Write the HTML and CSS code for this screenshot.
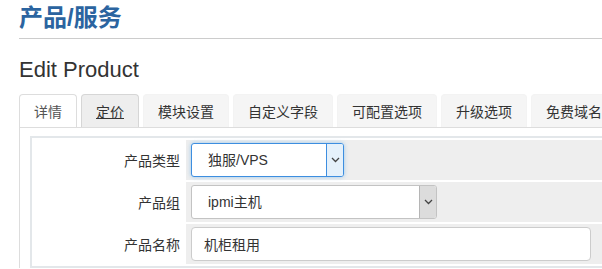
FILE: index.html
```html
<!DOCTYPE html>
<html lang="zh-CN">
  <head>
    <meta charset="UTF-8" />
    <meta name="viewport" content="width=device-width, initial-scale=1.0" />
    <title>产品/服务</title>
    <link rel="stylesheet" href="styles.css">
  </head>
  <body>
    <div class="page">
      <h1 class="page-title">产品/服务</h1>
      <h2 class="sub-title">Edit Product</h2>

      <ul class="tabs">
        <li class="tab active">详情</li>
        <li class="tab hover">定价</li>
        <li class="tab">模块设置</li>
        <li class="tab">自定义字段</li>
        <li class="tab">可配置选项</li>
        <li class="tab">升级选项</li>
        <li class="tab">免费域名</li>
      </ul>

      <div class="tab-content">
        <div class="panel">
          <table class="form-table">
            <tr>
              <td class="field-label">产品类型</td>
              <td class="field-value">
                <div class="select focused" style="width: 153px">
                  <span class="select-text">独服/VPS</span>
                  <span class="select-btn">
                    <svg width="9" height="6" viewBox="0 0 9 6"><path d="M1 1l3.5 3.5L8 1" fill="none" stroke="#444" stroke-width="1.3"/></svg>
                  </span>
                </div>
              </td>
            </tr>
            <tr>
              <td class="field-label">产品组</td>
              <td class="field-value">
                <div class="select" style="width: 246px">
                  <span class="select-text">ipmi主机</span>
                  <span class="select-btn">
                    <svg width="9" height="6" viewBox="0 0 9 6"><path d="M1 1l3.5 3.5L8 1" fill="none" stroke="#444" stroke-width="1.3"/></svg>
                  </span>
                </div>
              </td>
            </tr>
            <tr>
              <td class="field-label">产品名称</td>
              <td class="field-value">
                <div class="text-input">机柜租用</div>
              </td>
            </tr>
          </table>
        </div>
      </div>
    </div>
  </body>
</html>
```

FILE: styles.css
```css
* {
  box-sizing: border-box;
}

body {
  margin: 0;
  font-family: "Liberation Sans", "Noto Sans CJK SC", sans-serif;
  color: #333;
  background: #fff;
}

.page {
  padding-left: 19px;
  overflow: hidden;
}

.page-title {
  margin: 0 0 6px;
  padding-top: 4px;
  font-size: 24px;
  line-height: 28px;
  font-weight: bold;
  color: #2b64a0;
}

.sub-title {
  margin: 0;
  padding-top: 18px;
  border-top: 1px solid #ccc;
  font-size: 22px;
  line-height: 26px;
  font-weight: normal;
  color: #333;
}

.tabs {
  display: flex;
  list-style: none;
  margin: 11px 0 0;
  padding: 0;
  border-bottom: 1px solid #ddd;
  white-space: nowrap;
  overflow: hidden;
}

.tab {
  flex: none;
  margin-right: 4px;
  margin-bottom: -1px;
  padding: 0 14px;
  height: 34px;
  line-height: 32px;
  font-size: 14px;
  font-family: "Noto Sans CJK SC", sans-serif;
  color: #333;
  background: #f5f5f5;
  border: 1px solid #f3f3f3;
  border-bottom-color: #ddd;
  border-radius: 4px 4px 0 0;
}

.tab.active {
  background: #fff;
  color: #555;
  border-color: #ddd;
  border-bottom-color: #fff;
}

.tab.hover {
  background: #eee;
  border-color: #d6d6d6;
  border-bottom-color: #ddd;
  text-decoration: underline;
}

.tab-content {
  border-left: 1px solid #ddd;
  padding: 8px 0 0 10px;
  overflow: hidden;
}

.panel {
  width: calc(100% + 40px);
  border: 2px solid #e3e7ea;
  padding-top: 2px;
}

.form-table {
  width: 100%;
  border-collapse: separate;
  border-spacing: 0 2px;
  margin-top: -2px;
  font-size: 14px;
  font-family: "Noto Sans CJK SC", sans-serif;
}

.form-table td {
  height: 40px;
  padding: 0;
}

.field-label {
  width: 154px;
  text-align: right;
  padding-right: 6px !important;
  background: #fff;
}

.field-value {
  background: #eee;
  padding: 3px 5px !important;
}

.select {
  display: flex;
  height: 34px;
  background: #fff;
  border: 1px solid #c3c3c3;
  border-radius: 3px;
  font-family: "Liberation Sans", "Noto Sans CJK SC", sans-serif;
  overflow: hidden;
}

.select-text {
  flex: 1;
  padding-left: 16px;
  line-height: 32px;
  color: #333;
}

.select-btn {
  width: 17px;
  display: flex;
  align-items: center;
  justify-content: center;
  background: #dcdcdc;
  border-left: 1px solid #b5b5b5;
}

.select.focused {
  border-color: #3d8ee0;
  box-shadow: 0 0 4px rgba(102, 175, 233, 0.6);
}

.select.focused .select-btn {
  background: #e5f1fb;
  border-left-color: #3d8ee0;
}

.text-input {
  width: 400px;
  height: 34px;
  padding-left: 12px;
  line-height: 32px;
  background: #fff;
  border: 1px solid #ccc;
  border-radius: 4px;
  color: #333;
}
```
